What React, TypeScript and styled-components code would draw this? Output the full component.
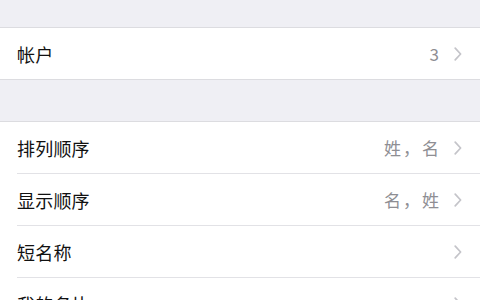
import styled, { createGlobalStyle } from 'styled-components';

const GlobalStyle = createGlobalStyle`
  html, body {
    margin: 0;
    padding: 0;
    background: #efeff4;
  }
  body {
    font-family: 'Noto Sans CJK SC', 'Noto Sans', sans-serif;
  }
`;

type Item = { label: string; value?: string };

const accountItems: Item[] = [{ label: '帐户', value: '3' }];

const orderItems: Item[] = [
  { label: '排列顺序', value: '姓，名' },
  { label: '显示顺序', value: '名，姓' },
  { label: '短名称' },
  { label: '我的名片' },
];

function Chevron() {
  return (
    <svg width="8" height="14" viewBox="0 0 8 14">
      <path d="M1.2 1.2 L6.6 7 L1.2 12.8" fill="none" stroke="#c4c4c9" strokeWidth="1.7" strokeLinecap="round" strokeLinejoin="round" />
    </svg>
  );
}

function Section({ items, top }: { items: Item[]; top: number }) {
  return (
    <Group $top={top}>
      {items.map((item, i) => (
        <Row key={item.label} $last={i === items.length - 1}>
          <Label>{item.label}</Label>
          <Right>
            {item.value && <Value>{item.value}</Value>}
            <Chevron />
          </Right>
        </Row>
      ))}
    </Group>
  );
}

export default function App() {
  return (
    <>
      <GlobalStyle />
      <Page>
        <Section items={accountItems} top={27} />
        <Section items={orderItems} top={41} />
      </Page>
    </>
  );
}

const Page = styled.div`
  width: 480px;
  height: 300px;
  overflow: hidden;
  background: #efeff4;
`;

const Group = styled.div<{ $top: number }>`
  margin-top: ${({ $top }) => $top}px;
  background: #fff;
  border-top: 1px solid #dcdce0;
  border-bottom: 1px solid #dcdce0;
`;

const Row = styled.div<{ $last: boolean }>`
  height: 52px;
  margin-left: 17px;
  padding-right: 18px;
  display: flex;
  align-items: center;
  justify-content: space-between;
  box-sizing: border-box;
  border-bottom: ${({ $last }) => ($last ? 'none' : '1px solid #e2e2e6')};
  &:last-child {
    height: 51px;
  }
`;

const Label = styled.span`
  font-size: 18px;
  color: #111;
  letter-spacing: 0.2px;
`;

const Right = styled.div`
  display: flex;
  align-items: center;
  gap: 13px;
`;

const Value = styled.span`
  font-size: 17px;
  color: #8e8e93;
  letter-spacing: 2px;
`;
